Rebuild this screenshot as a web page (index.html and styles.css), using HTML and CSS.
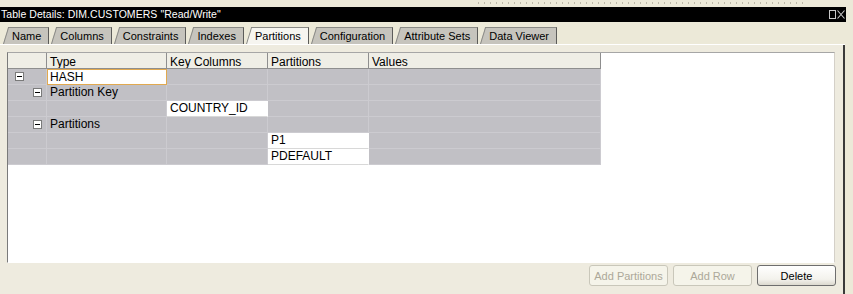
FILE: index.html
```html
<!DOCTYPE html>
<html>
<head>
<meta charset="utf-8">
<link rel="stylesheet" href="styles.css">
</head>
<body>
<div class="grip"><div class="dots"></div></div>
<div class="titlebar">
  <span class="title">Table Details: DIM.CUSTOMERS "Read/Write"</span>
  <span class="winicons">
    <svg width="7" height="9" viewBox="0 0 7 9"><rect x="0.5" y="0.5" width="6" height="8" fill="none" stroke="#c8c8c8"/></svg>
    <svg width="8" height="9" viewBox="0 0 8 9"><path d="M0.5 0.5 L7.5 8.5 M7.5 0.5 L0.5 8.5" stroke="#c8c8c8" stroke-width="1.1"/></svg>
  </span>
</div>
<div class="frame">
  <div class="tabs">
    <div class="tab">Name</div>
    <div class="tab">Columns</div>
    <div class="tab">Constraints</div>
    <div class="tab">Indexes</div>
    <div class="tab active">Partitions</div>
    <div class="tab">Configuration</div>
    <div class="tab">Attribute Sets</div>
    <div class="tab">Data Viewer</div>
  </div>
  <div class="content">
    <div class="sheet">
      <div class="grid">
        <div class="th"></div>
        <div class="th">Type</div>
        <div class="th">Key Columns</div>
        <div class="th">Partitions</div>
        <div class="th">Values</div>

        <div class="td"><span class="tog lvl0"></span></div>
        <div class="td edit">HASH</div>
        <div class="td"></div>
        <div class="td"></div>
        <div class="td"></div>

        <div class="td"><span class="tog lvl1"></span></div>
        <div class="td">Partition Key</div>
        <div class="td"></div>
        <div class="td"></div>
        <div class="td"></div>

        <div class="td"></div>
        <div class="td"></div>
        <div class="td white">COUNTRY_ID</div>
        <div class="td"></div>
        <div class="td"></div>

        <div class="td"><span class="tog lvl1"></span></div>
        <div class="td">Partitions</div>
        <div class="td"></div>
        <div class="td"></div>
        <div class="td"></div>

        <div class="td"></div>
        <div class="td"></div>
        <div class="td"></div>
        <div class="td white">P1</div>
        <div class="td"></div>

        <div class="td"></div>
        <div class="td"></div>
        <div class="td"></div>
        <div class="td white">PDEFAULT</div>
        <div class="td"></div>
      </div>
    </div>
    <div class="actions">
      <button class="btn" disabled>Add Partitions</button>
      <button class="btn" disabled>Add Row</button>
      <button class="btn">Delete</button>
    </div>
  </div>
</div>
</body>
</html>
```
FILE: styles.css
```css
html, body {
  margin: 0;
  padding: 0;
}
body {
  width: 853px;
  height: 294px;
  overflow: hidden;
  background: #ece9d8;
  font-family: "Liberation Sans", Arial, sans-serif;
  color: #000;
}
.grip {
  height: 7px;
  box-sizing: border-box;
  padding-top: 2px;
}
.dots {
  margin-left: 478px;
  width: 330px;
  height: 2px;
  background: repeating-linear-gradient(90deg, #bdb9aa 0 1px, transparent 1px 6px);
}
.titlebar {
  width: 846px;
  height: 15px;
  background: #000;
  color: #fff;
  display: flex;
  align-items: center;
  justify-content: space-between;
  box-sizing: border-box;
  padding-left: 1px;
}
.title {
  font-size: 10.5px;
  line-height: 15px;
  letter-spacing: 0.05px;
}
.winicons {
  display: flex;
  gap: 1px;
  margin-right: 1px;
}
.winicons svg {
  display: block;
}
.frame {
  width: 845px;
  height: 272px;
  display: flex;
  flex-direction: column;
}
.tabs {
  height: 17px;
  padding: 5px 0 0 1px;
  display: flex;
  gap: 2px;
  border-bottom: 1px solid #fff;
}
.tab {
  position: relative;
  z-index: 0;
  font-size: 11px;
  line-height: 18px;
  height: 17px;
  padding: 0 8px 0 9px;
}
.tab:first-child {
  margin-left: 2px;
}
.tab::before {
  content: "";
  position: absolute;
  z-index: -1;
  left: 0;
  top: 0;
  bottom: 0;
  width: 12px;
  background: #c6c4bd;
  border-left: 1px solid #8a8a86;
  border-top: 1px solid #8a8a86;
  box-sizing: border-box;
  transform: skewX(-17deg);
  transform-origin: bottom left;
}
.tab::after {
  content: "";
  position: absolute;
  z-index: -1;
  left: 6px;
  right: 0;
  top: 0;
  bottom: 0;
  background: #c6c4bd;
  border-top: 1px solid #8a8a86;
  border-right: 1px solid #5c5c5a;
  box-sizing: border-box;
}
.tab.active::before,
.tab.active::after {
  background: #f6f5f0;
}
.content {
  flex: 1;
  border-right: 2px solid #3a3a3a;
  padding: 7px 7px 0 7px;
  background: #eeebdf;
}
.sheet {
  width: 828px;
  height: 211px;
  box-sizing: border-box;
  background: #fff;
  border-left: 1px solid #7a7a7a;
  border-top: 1px solid #a6a6a6;
  border-right: 1px solid #d4d0c8;
  border-bottom: 1px solid #fff;
}
.grid {
  display: grid;
  grid-template-columns: 39px 120px 101px 101px 232px;
  grid-auto-rows: 16px;
  width: 593px;
  font-size: 12px;
}
.th {
  background: #efeee6;
  border-right: 1px solid #8e8e8e;
  border-bottom: 1px solid #8e8e8e;
  box-sizing: border-box;
  padding: 2px 0 0 3px;
  line-height: 14px;
  overflow: hidden;
  white-space: nowrap;
}
.td {
  background: #c1c0c5;
  border-right: 1px solid #cccbd0;
  border-bottom: 1px solid #cccbd0;
  box-sizing: border-box;
  padding-left: 3px;
  line-height: 15px;
  white-space: nowrap;
  overflow: hidden;
  position: relative;
}
.td.white {
  background: #fff;
  border-color: #fff;
  border-bottom-color: #d8d8d8;
}
.td.edit {
  background: #fff;
  border: 1px solid #e1a94f;
  padding-left: 2px;
  line-height: 14px;
}
.tog {
  position: absolute;
  top: 3px;
  width: 9px;
  height: 9px;
  box-sizing: border-box;
  border: 1px solid #7a7a7a;
  background: #fff;
}
.tog::after {
  content: "";
  position: absolute;
  left: 1px;
  top: 3px;
  width: 5px;
  height: 1px;
  background: #000;
}
.tog.lvl0 {
  left: 7px;
}
.tog.lvl1 {
  left: 25px;
}
.actions {
  display: flex;
  justify-content: flex-end;
  gap: 5px;
  padding-top: 2px;
}
.btn {
  width: 79px;
  height: 21px;
  padding: 0;
  font-family: "Liberation Sans", Arial, sans-serif;
  font-size: 11px;
  color: #000;
  border: 1px solid #6e6e6e;
  border-radius: 3px;
  background: linear-gradient(#ffffff, #f3f2ec 70%, #dcd9cf);
}
.btn:disabled {
  color: #aca899;
  border-color: #c9c7ba;
  background: #f5f4ea;
}
```
